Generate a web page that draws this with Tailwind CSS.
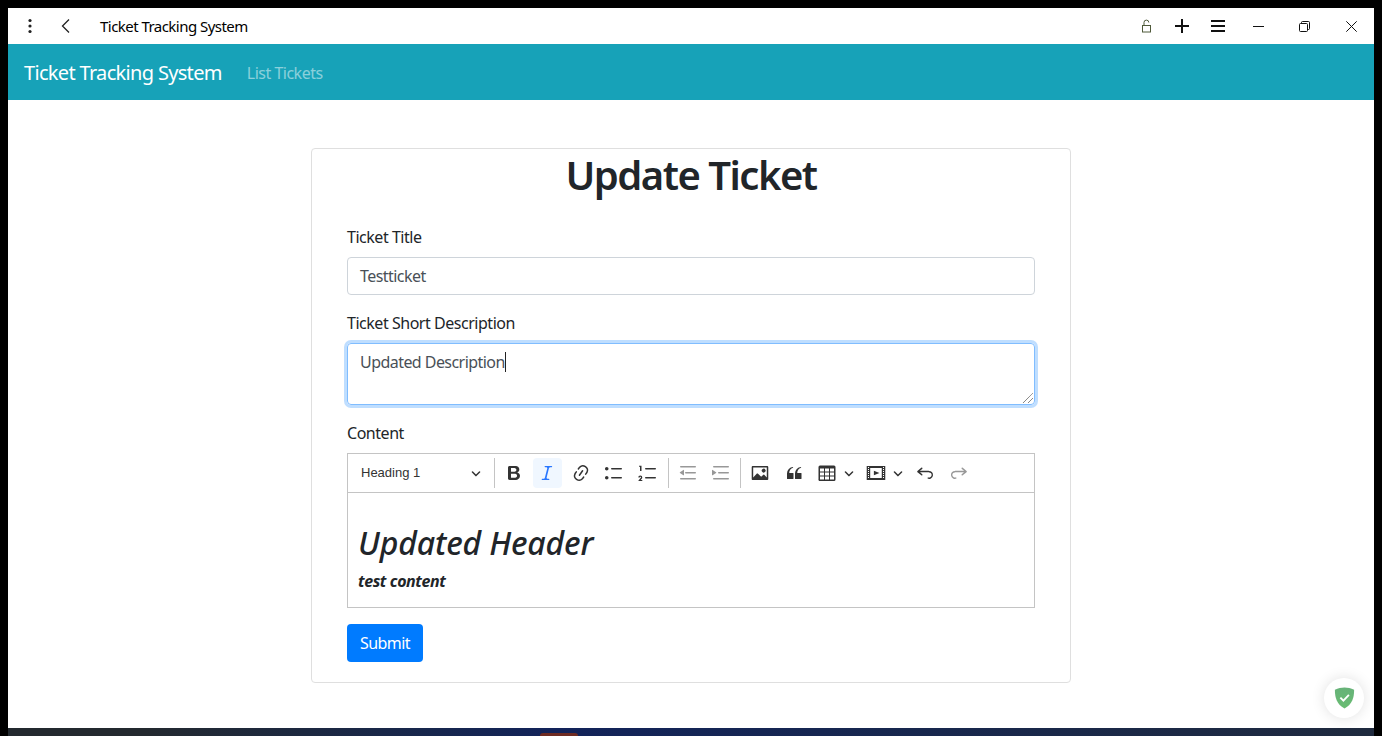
<!DOCTYPE html>
<html lang="en">
<head>
<meta charset="utf-8">
<title>Ticket Tracking System</title>
<script src="https://cdn.jsdelivr.net/npm/@tailwindcss/browser@4"></script>
</head>
<body class="bg-black overflow-hidden font-['Noto_Sans',sans-serif] text-[#212529]">
<div class="w-[1382px] h-[736px] px-2 pt-2 flex flex-col relative">
  <header class="h-9 bg-white flex items-center shrink-0 relative">
    <svg class="ml-[14px] w-4 h-4" viewBox="0 0 16 16"><circle cx="8" cy="2.5" r="1.6" fill="#222"/><circle cx="8" cy="8" r="1.6" fill="#222"/><circle cx="8" cy="13.5" r="1.6" fill="#222"/></svg>
    <svg class="ml-5 w-4 h-4" viewBox="0 0 16 16" fill="none" stroke="#222" stroke-width="1.3"><path d="M11 1.5 4.5 8l6.500 6.500"/></svg>
    <span class="ml-[26px] text-[15px] text-black tracking-[-0.54px]">Ticket Tracking System</span>
    <div class="ml-auto flex items-center">
      <svg class="w-3 h-[14px]" viewBox="0 0 12 14" fill="none" stroke="#4f5a3a" stroke-width="1"><rect x="1.500" y="6.500" width="8" height="6.500"/><path d="M3 6.500V3.500a2.400 2.400 0 0 1 4.800 0"/></svg>
      <svg class="ml-[22px] w-[14px] h-[14px]" viewBox="0 0 14 14" stroke="#111" stroke-width="2"><path d="M0 7h14M7 0v14"/></svg>
      <svg class="ml-[22px] w-[14px] h-3" viewBox="0 0 14 12" stroke="#111" stroke-width="2"><path d="M0 1h14M0 6h14M0 11h14"/></svg>
      <svg class="ml-[28px] w-[11px] h-[11px]" viewBox="0 0 11 11" stroke="#111" stroke-width="1"><path d="M0 5.500h11"/></svg>
      <svg class="ml-[35px] w-[11px] h-[11px]" viewBox="0 0 11 11" fill="none" stroke="#111" stroke-width="1"><rect x=".5" y="2.500" width="8" height="8" rx="1"/><path d="M2.500 2.500V1.500a1 1 0 0 1 1-1h6a1 1 0 0 1 1 1v6a1 1 0 0 1-1 1h-1"/></svg>
      <svg class="ml-[36px] mr-[17px] w-[11px] h-[11px]" viewBox="0 0 11 11" stroke="#111" stroke-width="1"><path d="M.3.3l10.400 10.400M10.700.3.3 10.700"/></svg>
    </div>
  </header>

  <nav class="h-14 bg-[#17a2b8] flex items-center px-4 pt-[2px] shrink-0">
    <span class="text-xl text-white tracking-[-0.68px]">Ticket Tracking System</span>
    <span class="ml-[25px] text-base text-white/50 tracking-[-0.5px]">List Tickets</span>
  </nav>

  <main class="bg-white h-[628px] shrink-0 pt-12">
    <section class="w-[760px] h-[535px] mx-auto border border-[#dfdfdf] rounded px-[35px]">
      <h1 class="text-[40px] leading-[48px] font-semibold text-center mt-[2px] tracking-[-1.5px] mb-[26px]">Update Ticket</h1>

      <label class="block text-base leading-6 tracking-[-0.47px] mb-2">Ticket Title</label>
      <div class="h-[38px] border border-[#ced4da] rounded px-3 flex items-center text-base text-[#495057] tracking-[-0.55px]">Testticket</div>

      <label class="block text-base leading-6 tracking-[-0.47px] mt-4 mb-2">Ticket Short Description</label>
      <div class="h-[62px] border border-[#80bdff] rounded px-3 pt-[6px] text-base leading-6 text-[#495057] tracking-[-0.55px] shadow-[0_0_0_3px_rgba(0,123,255,0.25)] relative">Updated Description<span class="inline-block w-px h-5 bg-[#222] align-[-4px]"></span>
        <svg class="absolute right-0 bottom-0 w-3 h-3" viewBox="0 0 12 12" stroke="#555" stroke-width="1" stroke-dasharray="1 .5"><path d="M1 11 11 1M6 11l5-5"/></svg>
      </div>

      <label class="block text-base leading-6 tracking-[-0.47px] mt-4 mb-2">Content</label>
      <div class="border border-[#c4c4c4]">
        <div class="h-[39px] border-b border-[#c4c4c4] flex items-center relative text-[#333]">
          <div class="w-[146px] pl-[13px] pr-[13px] flex items-center justify-between font-['Liberation_Sans',sans-serif] text-[13px]">
            <span>Heading 1</span>
            <svg class="w-[10px] h-[10px]" viewBox="0 0 10 10" fill="#333"><path d="M.941 4.523a.75.75 0 1 1 1.06-1.06l3.006 3.005 3.005-3.005a.75.75 0 1 1 1.06 1.06l-3.549 3.55a.75.75 0 0 1-1.168-.136L.941 4.523z"/></svg>
          </div>
          <div class="w-px h-[30px] bg-[#c4c4c4]"></div>
          <div class="ml-[4px] flex items-center gap-[4.5px]">
            <div class="w-[29px] h-[30px] flex items-center justify-center"><svg class="w-5 h-5" viewBox="0 0 20 20" fill="#333"><path d="M10.187 17H5.773c-.637 0-1.092-.138-1.364-.415-.273-.277-.409-.718-.409-1.323V4.738c0-.617.14-1.062.419-1.332.279-.27.73-.406 1.354-.406h4.68c.69 0 1.288.041 1.793.124.506.083.96.242 1.36.478.341.197.644.447.906.75a3.262 3.262 0 0 1 .808 2.162c0 1.401-.722 2.426-2.167 3.075C15.05 10.175 16 11.315 16 13.01a3.756 3.756 0 0 1-2.296 3.504 6.1 6.1 0 0 1-1.517.377c-.571.073-1.238.11-2 .11zm-.217-6.217H7v4.087h3.069c1.977 0 2.965-.69 2.965-2.072 0-.707-.256-1.22-.768-1.537-.512-.319-1.277-.478-2.296-.478zM7 5.13v3.619h2.606c.71 0 1.257-.067 1.644-.2.387-.134.682-.39.887-.768.16-.27.24-.571.24-.904 0-.71-.26-1.183-.78-1.418-.52-.236-1.315-.353-2.385-.353H7z"/></svg></div>
            <div class="w-[29px] h-[30px] rounded-sm bg-[#f0f7ff] flex items-center justify-center"><svg class="w-5 h-5" viewBox="0 0 20 20" fill="#2977ff"><path d="m9.586 14.633.021.004c-.036.335.095.655.393.962.082.083.173.15.274.201h1.474a.6.6 0 1 1 0 1.2H5.304a.6.6 0 0 1 0-1.2h1.15c.474-.07.809-.182 1.005-.334.157-.122.291-.32.404-.597l2.416-9.55a1.053 1.053 0 0 0-.281-.823 1.12 1.12 0 0 0-.442-.296H8.15a.6.6 0 0 1 0-1.2h6.443a.6.6 0 1 1 0 1.2h-1.195c-.376.056-.65.155-.823.296-.215.175-.423.439-.623.79l-2.366 9.347z"/></svg></div>
            <div class="w-[29px] h-[30px] flex items-center justify-center"><svg class="w-5 h-5" viewBox="0 0 20 20" fill="#333"><path d="m11.077 15 .991-1.416a.75.75 0 1 1 1.229.86l-1.148 1.64a.748.748 0 0 1-.217.206 5.251 5.251 0 0 1-8.503-5.955.741.741 0 0 1 .12-.274l1.147-1.639a.75.75 0 1 1 1.228.86L4.933 10.7l.006.003a3.75 3.75 0 0 0 6.132 4.294l.006.004zm5.494-5.335a.748.748 0 0 1-.12.274l-1.147 1.639a.75.75 0 1 1-1.228-.86l.86-1.23a3.75 3.75 0 0 0-6.144-4.301l-.86 1.229a.75.75 0 0 1-1.229-.86l1.148-1.64a.748.748 0 0 1 .217-.206 5.251 5.251 0 0 1 8.503 5.955zm-4.563-2.532a.75.75 0 0 1 .184 1.045l-3.155 4.505a.75.75 0 1 1-1.229-.86l3.155-4.506a.75.75 0 0 1 1.045-.184z"/></svg></div>
            <div class="w-[29px] h-[30px] flex items-center justify-center"><svg class="w-5 h-5" viewBox="0 0 20 20" fill="#333"><path d="M7 5.750c0 .414.336.75.75.75h9.500a.75.75 0 1 0 0-1.500h-9.500a.75.75 0 0 0-.75.75zm-6 0C1 4.784 1.777 4 2.750 4c.966 0 1.750.777 1.750 1.750 0 .966-.777 1.750-1.750 1.750C1.784 7.500 1 6.723 1 5.750zm6 9c0 .414.336.75.75.75h9.500a.75.75 0 1 0 0-1.500h-9.500a.75.75 0 0 0-.75.75zm-6 0c0-.966.777-1.750 1.750-1.750.966 0 1.750.777 1.750 1.750 0 .966-.777 1.750-1.750 1.750-.966 0-1.750-.777-1.750-1.750z"/></svg></div>
            <div class="w-[29px] h-[30px] flex items-center justify-center"><svg class="w-5 h-5" viewBox="0 0 20 20" fill="#333"><path d="M7 5.750c0 .414.336.75.75.75h9.500a.75.75 0 1 0 0-1.500h-9.500a.75.75 0 0 0-.75.75zM3.500 3v5H2V3.700H1v-1h2.500V3zM.343 17.857l2.590-3.257H2.920a.6.6 0 1 0-1.040 0H.302a2 2 0 1 1 3.995 0h-.001c-.048.405-.16.734-.333.988-.175.254-.59.692-1.244 1.312H4.300v1h-4l.043-.043zM7 14.750a.75.75 0 0 1 .75-.75h9.500a.75.75 0 1 1 0 1.500h-9.500a.75.75 0 0 1-.75-.75z"/></svg></div>
          </div>
          <div class="ml-[6px] w-px h-[30px] bg-[#c4c4c4]"></div>
          <div class="ml-[4px] flex items-center gap-[4.500px]">
            <div class="w-[29px] h-[30px] flex items-center justify-center"><svg class="w-5 h-5 opacity-50" viewBox="0 0 20 20" fill="#333"><path d="M2 3.750c0 .414.336.75.75.75h14.500a.75.75 0 1 0 0-1.500H2.750a.75.75 0 0 0-.75.75zm5 6c0 .414.336.75.75.75h9.500a.75.75 0 1 0 0-1.500h-9.500a.75.75 0 0 0-.75.75zM2.750 16.500h14.500a.75.75 0 1 0 0-1.500H2.750a.75.75 0 1 0 0 1.500zM5.400 6.950 1.980 9.360a.4.4 0 0 0 .01.66l3.390 2.210a.4.4 0 0 0 .62-.33V7.280a.4.4 0 0 0-.6-.33z"/></svg></div>
            <div class="w-[29px] h-[30px] flex items-center justify-center"><svg class="w-5 h-5 opacity-50" viewBox="0 0 20 20" fill="#333"><path d="M2 3.750c0 .414.336.75.75.75h14.500a.75.75 0 1 0 0-1.500H2.750a.75.75 0 0 0-.75.75zm5 6c0 .414.336.75.75.75h9.500a.75.75 0 1 0 0-1.500h-9.500a.75.75 0 0 0-.75.75zM2.750 16.500h14.500a.75.75 0 1 0 0-1.500H2.750a.75.75 0 1 0 0 1.500zM1.632 6.950 5.020 9.358a.4.4 0 0 1-.013.661l-3.390 2.207A.4.4 0 0 1 1 11.892V7.275a.4.4 0 0 1 .632-.326z"/></svg></div>
          </div>
          <div class="ml-[4px] w-px h-[30px] bg-[#c4c4c4]"></div>
          <div class="ml-[5px] flex items-center gap-[4.500px]">
            <div class="w-[29px] h-[30px] flex items-center justify-center"><svg class="w-5 h-5" viewBox="0 0 20 20" fill="#333"><path d="M6.910 10.540c.26-.23.64-.21.88.03l3.360 3.140 2.230-2.060a.64.64 0 0 1 .87 0l2.520 2.970V4.500H3.200v10.120l3.710-4.080zm10.270-7.510c.6 0 1.090.47 1.090 1.050v11.840c0 .59-.49 1.060-1.090 1.060H2.790c-.6 0-1.090-.47-1.090-1.060V4.080c0-.58.49-1.050 1.100-1.050h14.380zm-5.220 5.560a1.960 1.960 0 1 1 3.400-1.960 1.960 1.960 0 0 1-3.400 1.960z"/></svg></div>
            <div class="w-[29px] h-[30px] flex items-center justify-center"><svg class="w-5 h-5" viewBox="0 0 20 20" fill="#333"><path d="M3 10.423a6.500 6.500 0 0 1 6.056-6.408l.038.67C6.448 5.423 5.354 7.663 5.220 10H9c.552 0 .5.432.5.986v4.511c0 .554-.448.503-1 .503h-5c-.552 0-.5-.449-.5-1.003v-4.574zm8 0a6.500 6.500 0 0 1 6.056-6.408l.038.67c-2.646.739-3.740 2.979-3.873 5.315H17c.552 0 .5.432.5.986v4.511c0 .554-.448.503-1 .503h-5c-.552 0-.5-.449-.5-1.003v-4.574z"/></svg></div>
            <div class="w-[45px] h-[30px] flex items-center pl-[4px] gap-[7px]"><svg class="w-5 h-5 shrink-0" viewBox="0 0 20 20" fill="#333"><path d="M3 5.500v3h4v-3H3zm0 4v3h4v-3H3zm0 4v3h4v-3H3zm5 3h4v-3H8v3zm5 0h4v-3h-4v3zm4-4v-3h-4v3h4zm0-4v-3h-4v3h4zm1.500 8a1.500 1.500 0 0 1-1.500 1.500H3A1.500 1.500 0 0 1 1.500 16V4A1.500 1.500 0 0 1 3 2.500h14A1.500 1.500 0 0 1 18.500 4v12zM8 8.500h4v-3H8v3zm0 4h4v-3H8v3z"/></svg><svg class="w-[10px] h-[10px] shrink-0" viewBox="0 0 10 10" fill="#333"><path d="M.941 4.523a.75.75 0 1 1 1.060-1.060l3.006 3.005 3.005-3.005a.75.75 0 1 1 1.060 1.060l-3.549 3.550a.75.75 0 0 1-1.168-.136L.941 4.523z"/></svg></div>
            <div class="w-[44px] h-[30px] flex items-center pl-[4px] gap-[7px]"><svg class="w-5 h-5 shrink-0" viewBox="0 0 20 20" fill="#333"><path d="M18.680 3.030c.6 0 .59-.03.59.55v12.840c0 .59.01.56-.59.56H1.290c-.6 0-.59.03-.59-.56V3.580c0-.58-.01-.55.6-.55h17.380zM15.770 15V5H4.200v10h11.570zM2 4v1h1V4H2zm0 2v1h1V6H2zm0 2v1h1V8H2zm0 2v1h1v-1H2zm0 2v1h1v-1H2zm0 2v1h1v-1H2zm15-10v1h1V4h-1zm0 2v1h1V6h-1zm0 2v1h1V8h-1zm0 2v1h1v-1h-1zm0 2v1h1v-1h-1zm0 2v1h1v-1h-1zM7.880 7.730l5.580 2.290-5.580 2.270V7.730z"/></svg><svg class="w-[10px] h-[10px] shrink-0" viewBox="0 0 10 10" fill="#333"><path d="M.941 4.523a.75.75 0 1 1 1.060-1.060l3.006 3.005 3.005-3.005a.75.75 0 1 1 1.060 1.060l-3.549 3.550a.75.75 0 0 1-1.168-.136L.941 4.523z"/></svg></div>
            <div class="w-[29px] h-[30px] flex items-center justify-center"><svg class="w-5 h-5" viewBox="0 0 20 20" fill="#333"><path d="m5.042 9.367 2.189 1.837a.75.75 0 0 1-.965 1.149l-3.788-3.180a.747.747 0 0 1-.21-.284.75.75 0 0 1 .17-.945L6.230 4.762a.75.75 0 1 1 .964 1.150L4.863 7.866h8.917A.75.75 0 0 1 14 7.900a4 4 0 1 1-1.477 7.718l.344-1.489a2.500 2.500 0 1 0 1.094-4.640l.008-.12H5.042z"/></svg></div>
            <div class="w-[29px] h-[30px] flex items-center justify-center"><svg class="w-5 h-5 opacity-50" viewBox="0 0 20 20" fill="#333"><path d="m14.958 9.367-2.189 1.837a.75.75 0 0 0 .965 1.149l3.788-3.180a.747.747 0 0 0 .21-.284.75.75 0 0 0-.17-.945L13.770 4.762a.75.75 0 1 0-.964 1.150l2.331 1.955H6.220A.75.75 0 0 0 6 7.900a4 4 0 1 0 1.477 7.718l-.344-1.489A2.500 2.500 0 1 1 6.039 9.490l-.008-.12h8.927z"/></svg></div>
          </div>
        </div>
        <div class="h-[114px] px-[10px] pt-[26px] text-[#212529] italic">
          <h2 class="text-[32px] leading-[48px] font-medium tracking-[-0.15px]">Updated Header</h2>
          <p class="text-base leading-6 font-bold mt-[2px] tracking-[-0.4px]">test content</p>
        </div>
      </div>
      <button class="mt-4 w-[76px] h-[38px] bg-[#007bff] text-white text-base rounded tracking-[-0.55px]">Submit</button>
    </section>
  </main>

  <div class="h-2 shrink-0 bg-gradient-to-r from-[#23292f] from-10% via-[#12235a] via-40% to-[#1f2a3e] relative">
    <div class="absolute left-[532px] top-[5px] w-[38px] h-[3px] bg-[#6e2b22] rounded-t"></div>
  </div>

  <div class="absolute left-[1324px] top-[678px] w-10 h-10 rounded-full bg-white shadow-[0_0_14px_rgba(0,0,0,0.12)] flex items-center justify-center">
    <svg class="w-[21px] h-[22px]" viewBox="0 0 22 24"><defs><linearGradient id="sh" x1="0" y1="0" x2="0" y2="1"><stop offset="0" stop-color="#67b279"/><stop offset="1" stop-color="#68bc71"/></linearGradient></defs><path d="M11 .5C7.500 .5 4 1.400 .5 3c0 8.500 2 16 10.500 20.500C19.500 19 21.500 11.500 21.500 3 18 1.400 14.500 .5 11 .5z" fill="url(#sh)"/><path d="M6.500 11.500l3.300 3.300 6-6.300" fill="none" stroke="#fff" stroke-width="2"/></svg>
  </div>
</div>
</body>
</html>
